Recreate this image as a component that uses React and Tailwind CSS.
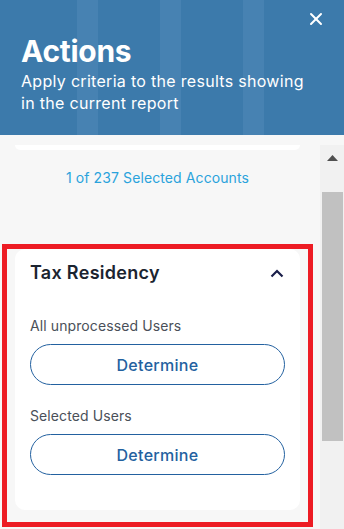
import { X } from "lucide-react";

const font = { fontFamily: "Inter, 'Noto Sans', sans-serif" };

const DetermineButton = () => (
  <button className="w-full h-[41px] rounded-full border border-[#2361a0] bg-white text-[16px] font-medium tracking-[0.3px] text-[#2361a0]">
    Determine
  </button>
);

export default function App() {
  return (
    <div
      className="relative w-[344px] h-[529px] overflow-hidden bg-[#f7f7f7] font-['Inter','Noto_Sans',sans-serif]"
      style={font}
    >
      {/* Header */}
      <div className="h-[135px] px-[21px] pt-[34px] text-white bg-[linear-gradient(90deg,#3c7aab_77px,#4782b2_77px,#4782b2_98px,#3c7aab_98px,#3c7aab_160px,#4782b2_160px,#4782b2_181px,#3c7aab_181px,#3c7aab_243px,#4782b2_243px,#4782b2_264px,#3c7aab_264px)]">
        <button className="absolute right-[18px] top-[9px] text-white">
          <X size={20} strokeWidth={2.4} />
        </button>
        <h1 className="text-[30px] font-bold leading-[34px] tracking-[-0.3px]">Actions</h1>
        <p className="mt-[2px] w-[292px] text-[16px] leading-[22px] tracking-[0.3px]">
          Apply criteria to the results showing in the current report
        </p>
      </div>

      {/* Body */}
      <div className="flex pt-[10px] h-[394px]">
        <div className="w-[320px] px-[15px] pr-[20px]">
          <div className="h-[5px] rounded-b-[10px] bg-white" />
          <p className="mt-[18px] text-center text-[14px] leading-[20px] tracking-[0.1px] text-[#2aa3dc]">
            1 of 237 Selected Accounts
          </p>

          <div className="mt-[61px] rounded-[10px] bg-white pl-[15px] pr-[15px] pt-[12px] pb-[35px]">
            <div className="flex items-center justify-between pr-[1px]">
              <h2 className="text-[18px] font-semibold leading-[24px] tracking-[0.3px] text-[#1b2430]">Tax Residency</h2>
              <svg width="14" height="9" viewBox="0 0 14 9" fill="none">
                <path d="M1.5 7.5L7 2l5.5 5.5" stroke="#1a1f4a" strokeWidth="2.2" />
              </svg>
            </div>

            <p className="mt-[31px] text-[14px] leading-[20px] tracking-[0.1px] text-[#4a5059]">All unprocessed Users</p>
            <div className="mt-[8px]">
              <DetermineButton />
            </div>

            <p className="mt-[21px] text-[14px] leading-[20px] tracking-[0.1px] text-[#4a5059]">Selected Users</p>
            <div className="mt-[8px]">
              <DetermineButton />
            </div>
          </div>
        </div>

        {/* Scrollbar */}
        <div className="w-[24px] bg-[#f1f1f1] flex flex-col items-center">
          <svg className="mt-[10px]" width="11" height="6" viewBox="0 0 11 6">
            <path d="M0 6L5.5 0L11 6Z" fill="#505050" />
          </svg>
          <div className="mt-[31px] ml-[1px] w-[21px] h-[249px] bg-[#c1c1c1]" />
        </div>
      </div>

      {/* Annotation outline */}
      <div className="absolute left-[2px] top-[244px] w-[311px] h-[283px] border-[5px] border-[#ed1c24] pointer-events-none" />
    </div>
  );
}
